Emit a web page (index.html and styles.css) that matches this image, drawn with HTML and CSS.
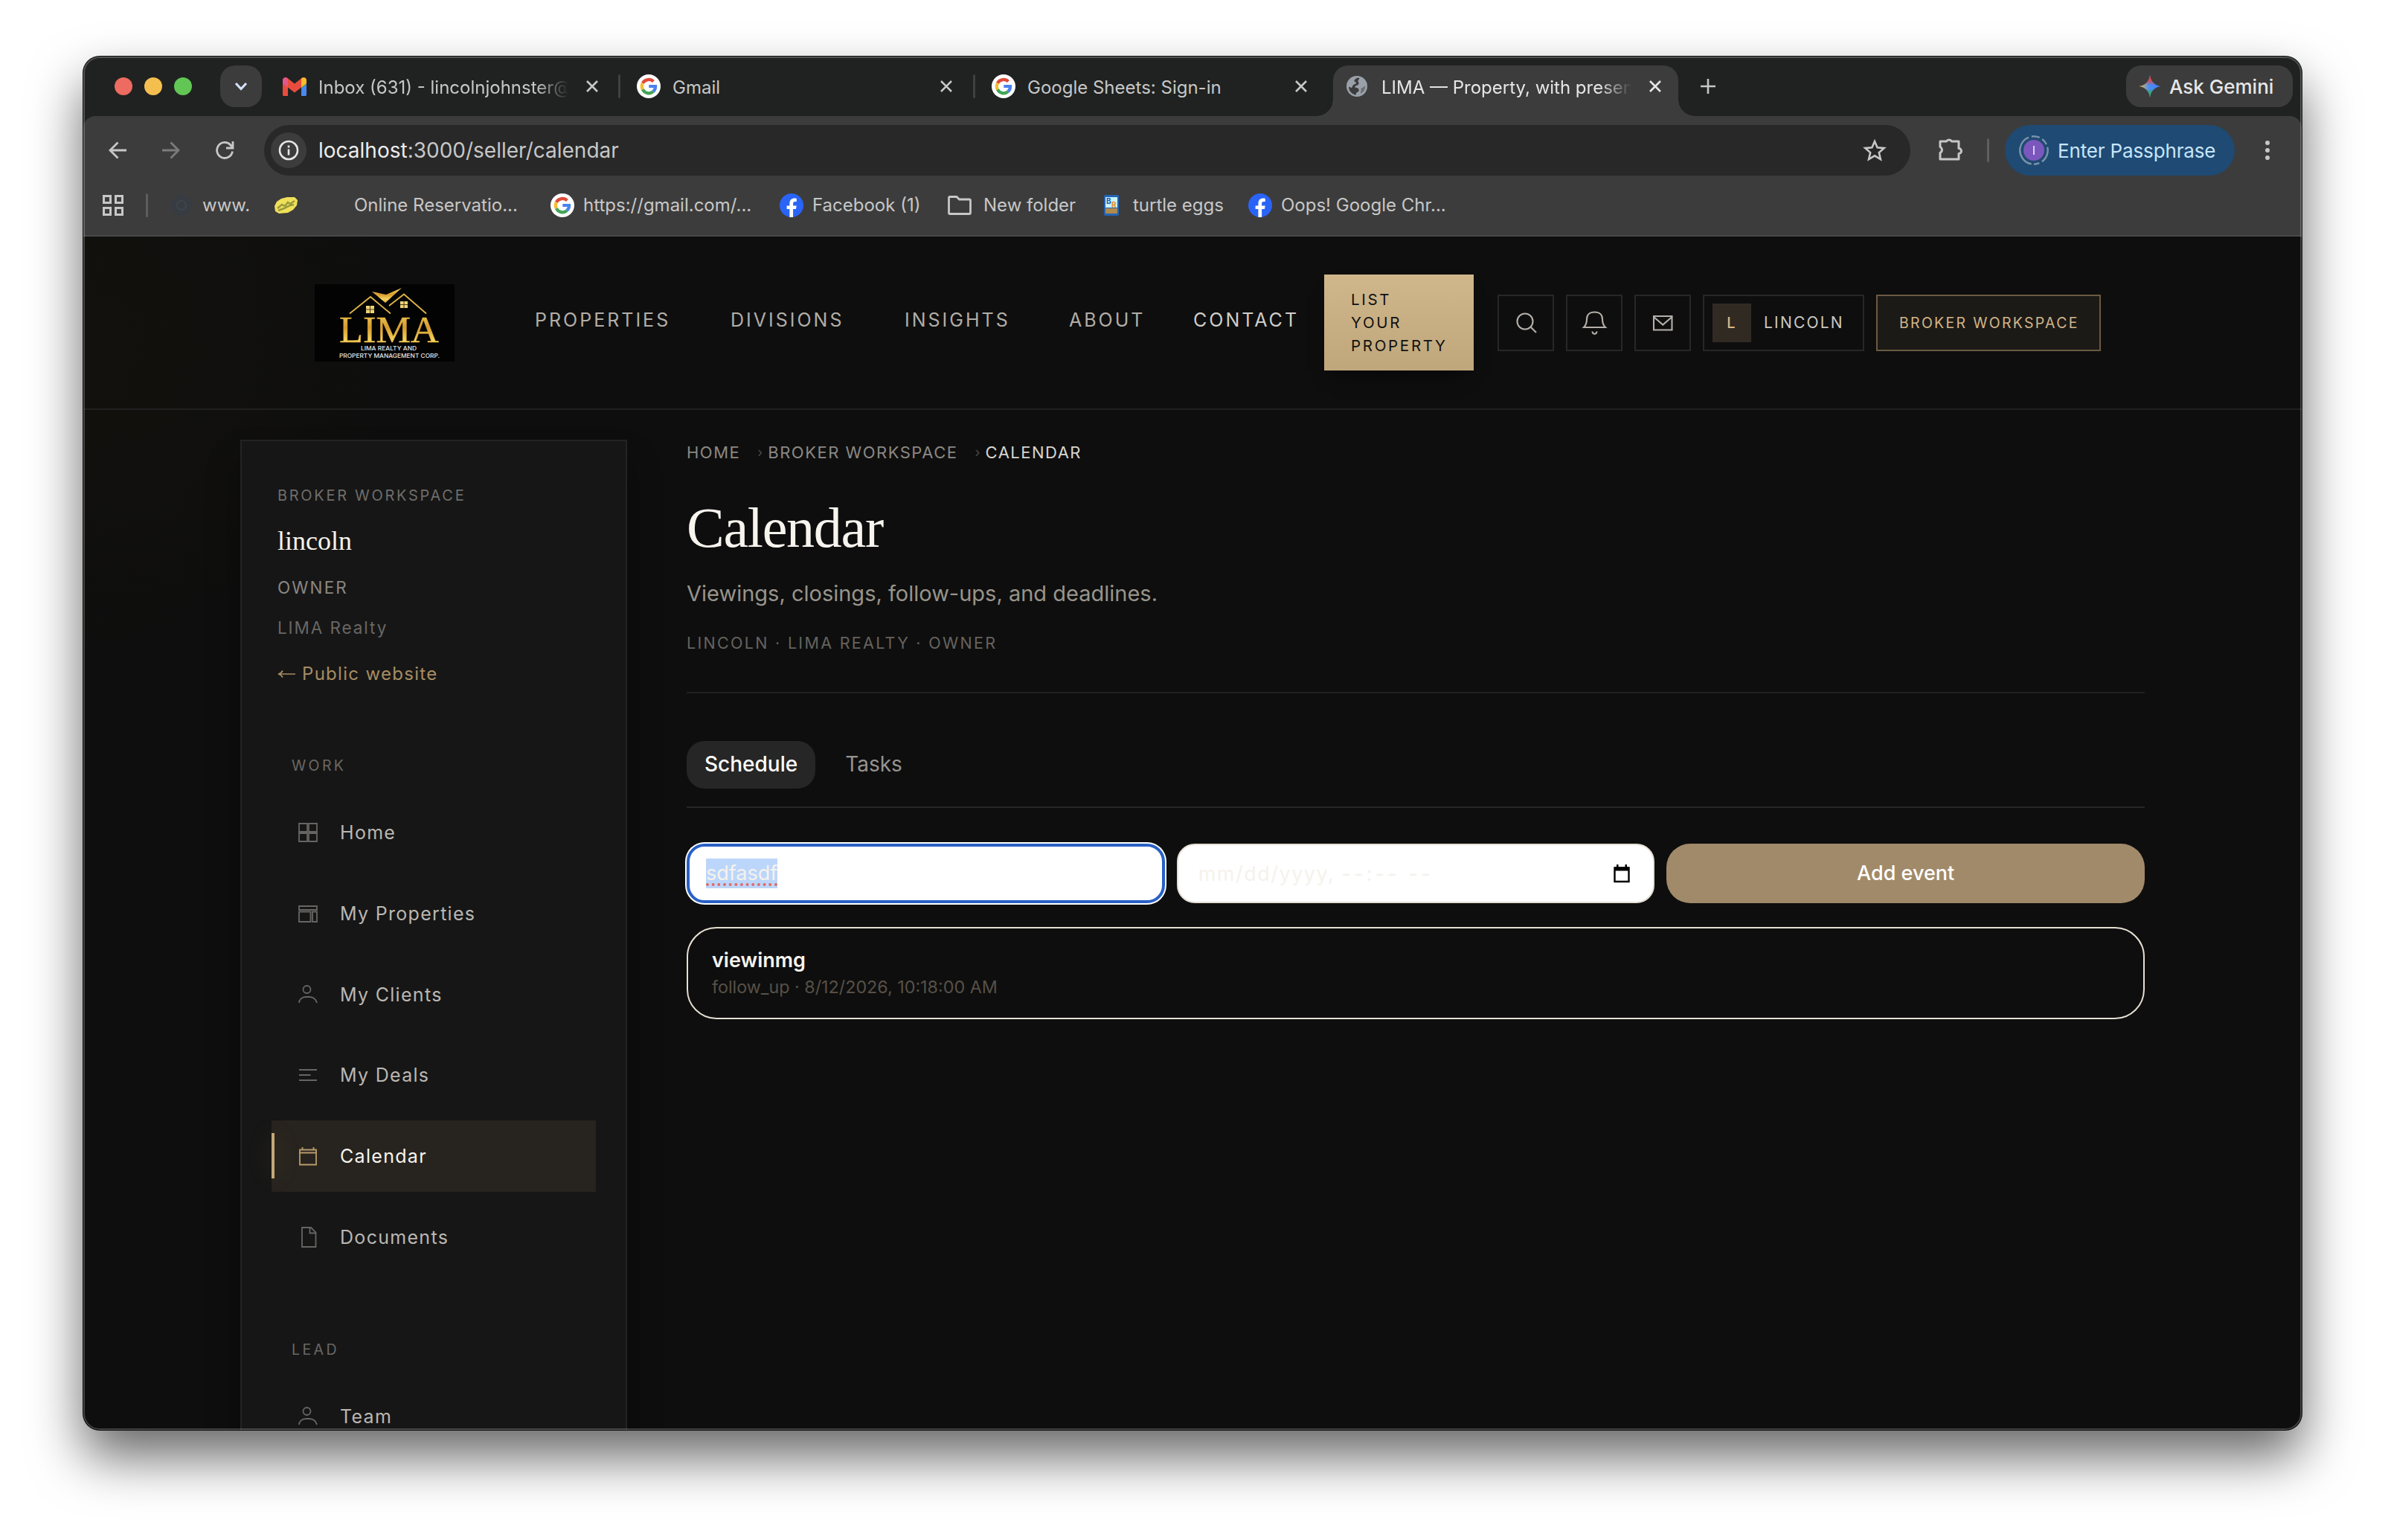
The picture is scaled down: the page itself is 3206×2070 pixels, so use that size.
FILE: index.html
```html
<!DOCTYPE html>
<html lang="en">
<head>
    <meta charset="UTF-8">
    <meta name="viewport" content="width=device-width, initial-scale=1.0">
    <title>LIMA — Property, with presence</title>
    <link rel="stylesheet" href="styles.css">
</head>

<body>

    <!-- shared icons -->
    <svg class="defs" width="0" height="0">
        <defs>
            <linearGradient id="gold" x1="0" y1="0" x2="0" y2="1">
                <stop offset="0" stop-color="#f6dc6c"/>
                <stop offset="0.45" stop-color="#d79a2c"/>
                <stop offset="0.75" stop-color="#f3d45e"/>
                <stop offset="1" stop-color="#e0a93a"/>
            </linearGradient>
            <linearGradient id="gemH" x1="0" y1="0" x2="1" y2="0">
                <stop offset="0" stop-color="#f6c02c"/>
                <stop offset="0.45" stop-color="#4d8df6"/>
                <stop offset="1" stop-color="#3f7cf0"/>
            </linearGradient>
            <linearGradient id="gemV" x1="0" y1="0" x2="0" y2="1">
                <stop offset="0" stop-color="#ea4335"/>
                <stop offset="0.2" stop-color="#ea4335"/>
                <stop offset="0.45" stop-color="#ea4335" stop-opacity="0"/>
                <stop offset="0.6" stop-color="#34a853" stop-opacity="0"/>
                <stop offset="0.85" stop-color="#34a853"/>
            </linearGradient>
            <symbol id="google" viewBox="0 0 32 32">
                <circle cx="16" cy="16" r="16" fill="#fff"/>
                <path d="M22.4 9.6 A9.2 9.2 0 0 0 7.9 11.7" fill="none" stroke="#e04a3a" stroke-width="4.2"/>
                <path d="M7.9 11.7 A9.2 9.2 0 0 0 7.9 20.3" fill="none" stroke="#f6bd2d" stroke-width="4.2"/>
                <path d="M7.9 20.3 A9.2 9.2 0 0 0 22 23.1" fill="none" stroke="#43a457" stroke-width="4.2"/>
                <path d="M22 23.1 A9.2 9.2 0 0 0 25.1 16 H16.3" fill="none" stroke="#4a82ee" stroke-width="4.2"/>
            </symbol>
            <symbol id="facebook" viewBox="0 0 32 32">
                <circle cx="16" cy="16" r="16" fill="#2a64f6"/>
                <path d="M13.4 32V21H9.6v-4.6h3.8v-2.6c0-5 2.6-7.2 6.6-7.2 1.2 0 2.2.1 2.8.3v4.2h-2c-2 0-2.7.9-2.7 2.7v2.6h4.6l-.8 4.6h-3.8v11z" fill="#fff"/>
            </symbol>
            <symbol id="cross" viewBox="0 0 16 16">
                <path d="M1 1L15 15M15 1L1 15" fill="none" stroke="currentColor" stroke-width="2.6"/>
            </symbol>
            <symbol id="person" viewBox="0 0 26 26">
                <circle cx="11.5" cy="6" r="5"/>
                <path d="M1 24c0-4.500 4-8 9-8h5c5 0 9 3.500 10 8"/>
            </symbol>
        </defs>
    </svg>

    <div class="window">

        <div class="tabstrip">
            <div class="lights">
                <span class="light red"></span>
                <span class="light yellow"></span>
                <span class="light green"></span>
            </div>
            <div class="tab-search">
                <svg width="20" height="14" viewBox="0 0 20 14"><path d="M3 3l7 7.500 7-7.500" fill="none" stroke="#d3e0fb" stroke-width="3.200"/></svg>
            </div>

            <div class="tab tab-first">
                <svg class="gmail" width="32" height="25" viewBox="0 0 32 25">
                    <path d="M0 4v19.500c0 .8.700 1.500 1.500 1.500H7V9z" fill="#e94c3d"/>
                    <path d="M25 9v16h5.500c.8 0 1.500-.7 1.500-1.500V4z" fill="#4a88f0"/>
                    <path d="M25 9v6l7-6V4z" fill="#43a457"/>
                    <path d="M0 4v4l16 12.500L32 8V4c0-3.500-3.800-5.200-6.500-3L16 8.500 6.500 1C3.800-1.200 0 .5 0 4z" fill="#e94c3d"/>
                    <path d="M25 1.500v12L32 8V4c0-3.500-4-5.200-7-2.500z" fill="#f6bd2d"/>
                    <path d="M7 1.500v12L0 8V4C0 .5 4-1.200 7 1.500z" fill="#e2578a"/>
                </svg>
                <span class="tab-title faded">Inbox (631) - lincolnjohnster@</span>
                <svg class="close"><use href="#cross"/></svg>
            </div>
            <div class="tab-divider"></div>
            <div class="tab tab-second">
                <svg class="favicon"><use href="#google"/></svg>
                <span class="tab-title">Gmail</span>
                <svg class="close"><use href="#cross"/></svg>
            </div>
            <div class="tab-divider"></div>
            <div class="tab">
                <svg class="favicon"><use href="#google"/></svg>
                <span class="tab-title">Google Sheets: Sign-in</span>
                <svg class="close"><use href="#cross"/></svg>
            </div>
            <div class="tab tab-active">
                <svg class="globe" width="28" height="28" viewBox="0 0 28 28">
                    <circle cx="14" cy="14" r="14" fill="#9aa0a9"/>
                    <path d="M15 2.500c-2 1-4.500 2-4.500 4.500 0 1.500 2.500 1 2.500 2.500s-3 1.500-4.500 3.500c-1 1.500-.5 2.500-2 3L3 14.500C3 21 8 25 13 25.500c-.5-2 .5-3.500 2.500-4 2-1 1.500-4-.5-5-1.500-.8-3-.5-4-1.500 1-2 3.500-2 5-3.500 1-1 .5-3-.5-4C15 6 17 5 17.500 3z" fill="#3c3c3c"/>
                    <path d="M17 9c0 3 1.500 4.500 4 5 1.500.4 2 2 4.500 1.500C26 9 22.500 4.500 19 3.500 19.500 6 17.500 7 17 9z" fill="#9aa0a9"/>
                    <path d="M25.500 13.500c-.5 5-3 8.500-6.500 10.500 0-3 1-4 .5-7 1.500-.5 3-2 6-3.500z" fill="#3c3c3c" opacity="0.500"/>
                </svg>
                <span class="tab-title faded">LIMA — Property, with presen</span>
                <svg class="close"><use href="#cross"/></svg>
            </div>
            <svg class="new-tab" width="22" height="22" viewBox="0 0 22 22"><path d="M11 1v20M1 11h20" stroke="#c7c7c7" stroke-width="2.600"/></svg>
            <div class="gemini">
                <svg width="30" height="30" viewBox="0 0 30 30">
                    <path d="M15 0c1 8.500 6.500 14 15 15-8.500 1-14 6.500-15 15-1-8.500-6.500-14-15-15C8.500 14 14 8.500 15 0z" fill="url(#gemH)"/>
                    <path d="M15 0c1 8.500 6.500 14 15 15-8.500 1-14 6.500-15 15-1-8.500-6.500-14-15-15C8.500 14 14 8.500 15 0z" fill="url(#gemV)"/>
                </svg>
                <span>Ask Gemini</span>
            </div>
        </div>

        <div class="toolbar">
            <div class="nav-icons">
                <svg width="26" height="26" viewBox="0 0 26 26"><path d="M25 13H3M13.500 2.500L3 13l10.500 10.500" fill="none" stroke="#c7c7c7" stroke-width="2.800"/></svg>
                <svg width="26" height="26" viewBox="0 0 26 26"><path d="M1 13h22M12.500 2.500L23 13 12.500 23.500" fill="none" stroke="#7b7b7b" stroke-width="2.800"/></svg>
                <svg width="26" height="26" viewBox="0 0 26 26"><path d="M23.500 14.500A10.500 10.500 0 1 1 21 6l2.500 3M24 1v9h-9" fill="none" stroke="#c7c7c7" stroke-width="2.800"/></svg>
            </div>
            <div class="omnibox">
                <div class="site-info">
                    <svg width="28" height="28" viewBox="0 0 28 28"><circle cx="14" cy="14" r="12" fill="none" stroke="#e6e6e6" stroke-width="2.600"/><path d="M14 12.500v8M14 7.500v3" stroke="#e6e6e6" stroke-width="2.600"/></svg>
                </div>
                <div class="url"><b>localhost</b>:3000/seller/calendar</div>
                <svg width="32" height="30" viewBox="0 0 32 30"><path d="M16 3l3.600 8.300 9.100.8-6.900 6 2.100 8.900L16 22.300 8.100 27l2.100-8.900-6.900-6 9.100-.8z" fill="none" stroke="#c7c7c7" stroke-width="2.600"/></svg>
            </div>
            <svg class="puzzle" width="34" height="34" viewBox="0 0 34 34"><path d="M3 7h8.500a4 4 0 0 1 7 0H28v9.500a3.500 3.500 0 0 1 0 7V31H3v-8.500a4.500 4.500 0 0 0 0-8z" fill="none" stroke="#c7c7c7" stroke-width="3" stroke-linejoin="round"/></svg>
            <div class="bar-divider"></div>
            <div class="profile-chip">
                <svg width="40" height="40" viewBox="0 0 40 40">
                    <circle cx="20" cy="20" r="18.700" fill="none" stroke="#7b93ab" stroke-width="2.400" stroke-dasharray="48 4 11 4 9 4 22 4 7.500 4" transform="rotate(100 20 20)"/>
                    <circle cx="20" cy="20" r="14" fill="#7b57bd"/>
                    <path d="M20 14v12" stroke="#e4daf6" stroke-width="1.800"/>
                </svg>
                <span>Enter Passphrase</span>
            </div>
            <div class="dots"><i></i><i></i><i></i></div>
        </div>

        <div class="bookmarks">
            <svg class="apps" width="28" height="28" viewBox="0 0 28 28"><path d="M1.500 1.500h9v9h-9zM17.500 1.500h9v9h-9zM1.500 17.500h9v9h-9zM17.500 17.500h9v9h-9z" fill="none" stroke="#c7c7c7" stroke-width="3"/></svg>
            <div class="bar-divider"></div>
            <div class="bookmark bm-www">
                <svg width="28" height="28" viewBox="0 0 28 28"><circle cx="14" cy="14" r="13.500" fill="#363c42"/><circle cx="14" cy="14" r="6" fill="none" stroke="#3e4449" stroke-width="2"/></svg>
                <span>www.</span>
            </div>
            <div class="bookmark bm-online">
                <svg width="32" height="22" viewBox="0 0 32 22"><path d="M1 12l3-6 6-4 8-2h10l4 4-1 7-5 6-7 4-12 1-5-3z" fill="#efe05a"/><path d="M5 15l6-5 4 2 4-5 3 2 6-4M6 18l8-3 8-4 5-1" fill="none" stroke="#9a9a3c" stroke-width="2.500"/></svg>
                <span>Online Reservatio...</span>
            </div>
            <div class="bookmark bm-gmail">
                <svg class="favicon"><use href="#google"/></svg>
                <span>https://gmail.com/...</span>
            </div>
            <div class="bookmark bm-fb">
                <svg class="favicon"><use href="#facebook"/></svg>
                <span>Facebook (1)</span>
            </div>
            <div class="bookmark bm-folder">
                <svg width="32" height="26" viewBox="0 0 32 26"><path d="M3 1.500h9l3.500 3.500H29c1 0 1.500.5 1.500 1.500V23c0 1-.5 1.500-1.500 1.500H3c-1 0-1.500-.5-1.500-1.500V3c0-1 .5-1.500 1.500-1.500z" fill="none" stroke="#c7c7c7" stroke-width="2.800"/></svg>
                <span>New folder</span>
            </div>
            <div class="bookmark bm-turtle">
                <svg width="20" height="28" viewBox="0 0 20 28">
                    <rect width="20" height="28" rx="2" fill="#2364b4"/>
                    <rect x="2" y="3" width="16" height="14" fill="#c9f3f8"/>
                    <rect x="2" y="18" width="16" height="7" fill="#b08a4e"/>
                    <text x="3" y="12" font-size="10" font-weight="700" fill="#2257b5">B</text>
                    <text x="10" y="17" font-size="10" font-weight="700" fill="#e58b2b">R</text>
                </svg>
                <span>turtle eggs</span>
            </div>
            <div class="bookmark bm-oops">
                <svg class="favicon"><use href="#facebook"/></svg>
                <span>Oops! Google Chr...</span>
            </div>
        </div>

        <div class="page">

            <header class="site-header">
                <svg class="logo" width="188" height="104" viewBox="0 0 188 104">
                    <rect width="188" height="104" fill="#030303"/>
                    <path d="M47 39.500L75 17l27 22.500M100 29l20-15.500 30 26" fill="none" stroke="#dcb548" stroke-width="1.800"/>
                    <path d="M77 10l19 4 21-9-22 20z" fill="url(#gold)"/>
                    <path d="M69 29h11v10H69zM115 23h10v9h-10z" fill="#ecd476"/>
                    <path d="M74.500 29v10M69 34h11M120 23v9M115 27.500h10" stroke="#4a3a10" stroke-width="1"/>
                    <text class="logo-name" x="33" y="78" textLength="134" lengthAdjust="spacingAndGlyphs" fill="url(#gold)">LIMA</text>
                    <text class="logo-sub" x="62" y="89" textLength="75" lengthAdjust="spacingAndGlyphs">LIMA REALTY AND</text>
                    <text class="logo-sub" x="33" y="98.500" textLength="135" lengthAdjust="spacingAndGlyphs">PROPERTY MANAGEMENT CORP.</text>
                </svg>
                <nav class="site-nav">
                    <a>PROPERTIES</a>
                    <a>DIVISIONS</a>
                    <a>INSIGHTS</a>
                    <a>ABOUT</a>
                    <a class="bright">CONTACT</a>
                </nav>
                <a class="cta">LIST YOUR PROPERTY</a>
                <div class="header-tools">
                    <a class="tool"><svg width="72" height="72" viewBox="2 2 72 72"><circle cx="37" cy="36" r="10.500"/><path d="M44.500 43.500l7.500 7.500"/></svg></a>
                    <a class="tool"><svg width="72" height="72" viewBox="2 2 72 72"><path d="M24 44h29c-3-3-4-6-4-11 0-6-4-9.500-10.500-9.500S28 27 28 33c0 5-1 8-4 11zM35.500 49.500c.5 4.500 5.500 4.500 6 0"/></svg></a>
                    <a class="tool"><svg width="72" height="72" viewBox="2 2 72 72"><path d="M26 29h24.500v18.500H26zM26 30l12.300 10.500L50.500 30"/></svg></a>
                    <a class="user"><span class="initial">L</span>LINCOLN</a>
                    <a class="broker">BROKER WORKSPACE</a>
                </div>
            </header>

            <div class="layout">
                <aside class="sidebar">
                    <div class="account">
                        <div class="eyebrow">BROKER WORKSPACE</div>
                        <div class="account-name">lincoln</div>
                        <div class="account-role">OWNER</div>
                        <div class="account-firm">LIMA Realty</div>
                        <a class="public-link"><svg width="24" height="12" viewBox="0 0 24 12"><path d="M24 6H1.500M7 1.500C5.500 4 4 5.500 1 6c3 .5 4.500 2 6 4.500" fill="none" stroke="#a78c62" stroke-width="1.700"/></svg>Public website</a>
                    </div>
                    <div class="group-title">WORK</div>
                    <ul class="menu">
                        <li><svg class="menu-icon" viewBox="0 0 26 26"><path d="M1 1h11v11H1zM14 1h11v11H14zM1 14h11v11H1zM14 14h11v11H14z"/></svg>Home</li>
                        <li><svg class="menu-icon" viewBox="0 0 26 26"><path d="M1 3h24v5H1zM1 10.500h15.500V24H1zM19 10.500h6V24h-6z"/></svg>My Properties</li>
                        <li><svg class="menu-icon"><use href="#person"/></svg>My Clients</li>
                        <li><svg class="menu-icon" viewBox="0 0 26 26"><path d="M1 6h24M1 13h15.500M1 20h24"/></svg>My Deals</li>
                        <li class="active"><svg class="menu-icon" viewBox="0 0 26 26"><path d="M2 4.500h22v20H2zM1 8.500h24M5.500 1v3.500M20.500 1v3.500"/></svg>Calendar</li>
                        <li><svg class="menu-icon" viewBox="0 0 26 26"><path d="M5 0h12l6.500 6.500V26H5zM15.500 0v7.500h8"/></svg>Documents</li>
                    </ul>
                    <div class="group-title">LEAD</div>
                    <ul class="menu">
                        <li><svg class="menu-icon"><use href="#person"/></svg>Team</li>
                    </ul>
                </aside>

                <main class="content">
                    <div class="crumbs">
                        <span>HOME</span><i>›</i>
                        <span>BROKER WORKSPACE</span><i>›</i>
                        <span class="current">CALENDAR</span>
                    </div>
                    <h1>Calendar</h1>
                    <p class="lead">Viewings, closings, follow-ups, and deadlines.</p>
                    <p class="meta">LINCOLN · LIMA REALTY · OWNER</p>

                    <div class="tabs">
                        <a class="pill selected">Schedule</a>
                        <a class="pill">Tasks</a>
                    </div>

                    <div class="event-form">
                        <div class="field focused"><span class="selection">sdfasdf</span></div>
                        <div class="field">
                            <span class="placeholder">mm/dd/yyyy, <span class="time">--:-- --</span></span>
                            <svg width="22" height="25" viewBox="0 0 22 25"><path d="M1.500 4.500h19v18.500h-19z" fill="none" stroke="#000" stroke-width="2.400"/><path d="M1 3.500h20v5H1zM4 0h2.500v4H4zM15.500 0H18v4h-2.500z"/></svg>
                        </div>
                        <div class="add-btn">Add event</div>
                    </div>

                    <div class="event">
                        <div class="event-title">viewinmg</div>
                        <div class="event-info">follow_up · 8/12/2026, 10:18:00 AM</div>
                    </div>
                </main>
            </div>
        </div>
    </div>

</body>
</html>
```
FILE: styles.css
```css
* {
    box-sizing: border-box;
}
body {
    margin: 0;
    padding: 76px 112px 0;
    width: 3206px;
    height: 2070px;
    overflow: hidden;
    background: #fff;
    font-family: Inter, "Liberation Sans", sans-serif;
}
svg {
    flex: none;
    display: block;
}
.defs {
    position: absolute;
}
.window {
    position: relative;
    width: 2982px;
    height: 1846px;
    border-radius: 22px;
    overflow: hidden;
    background: #0e0e0e;
    box-shadow: 0 0 0 1px #111, 0 36px 70px rgba(0, 0, 0, 0.6);
}
/* thin light rim over the window edge */
.window::after {
    content: "";
    position: absolute;
    inset: 0;
    border: 2px solid rgba(255, 255, 255, 0.22);
    border-radius: 22px;
    pointer-events: none;
}

/* tab strip */
.tabstrip {
    display: flex;
    height: 80px;
    padding-left: 42px;
    background: #202221;
    align-items: center;
    font-size: 24px;
    color: #c7c7c7;
}
.lights {
    display: flex;
    gap: 16px;
    margin-right: 38px;
}
.light {
    width: 24px;
    height: 24px;
    border-radius: 50%;
}
.red { background: #ed6b60; }
.yellow { background: #f5bf4f; }
.green { background: #62c655; }
.tab-search {
    width: 56px;
    height: 56px;
    border-radius: 20px;
    background: #3c3c3c;
    display: flex;
    align-items: center;
    justify-content: center;
}
.tab {
    display: flex;
    align-items: center;
    width: 474px;
    height: 56px;
    padding-left: 21px;
}
.tab-first {
    width: 479px;
    padding-left: 28px;
}
.tab-second {
    width: 473px;
}
.favicon {
    width: 32px;
    height: 32px;
}
.tab-title {
    width: 340px;
    margin: 3px 0 0 16px;
    overflow: hidden;
    white-space: nowrap;
    line-height: 34px;
}
.faded {
    -webkit-mask-image: linear-gradient(to right, #000 86%, transparent 99%);
    mask-image: linear-gradient(to right, #000 86%, transparent 99%);
}
.close {
    width: 16px;
    height: 16px;
    margin-left: 20px;
}
.tab-divider {
    width: 3px;
    height: 32px;
    margin-right: 1px;
    border-radius: 2px;
    background: #3f4140;
}
.tab-active {
    position: relative;
    width: 464px;
    height: 68px;
    padding: 0 0 12px 18px;
    margin: 12px 0 0 6px;
    border-radius: 20px 20px 0 0;
    background: #3c3c3c;
    color: #e6e6e6;
}
.tab-active::before,
.tab-active::after {
    content: "";
    position: absolute;
    bottom: 0;
    width: 22px;
    height: 22px;
}
.tab-active::before {
    left: -22px;
    background: radial-gradient(circle at 0 0, transparent 21.5px, #3c3c3c 22px);
}
.tab-active::after {
    right: -22px;
    background: radial-gradient(circle at 100% 0, transparent 21.5px, #3c3c3c 22px);
}
.tab-active .tab-title {
    margin-left: 19px;
    width: 340px;
}
.new-tab {
    margin-left: 29px;
}
.gemini {
    display: flex;
    align-items: center;
    width: 224px;
    height: 56px;
    margin-left: auto;
    margin-right: 12px;
    padding-left: 17px;
    gap: 11px;
    border-radius: 20px;
    background: #3c3c3c;
    color: #e6e6e6;
    font-size: 26px;
    font-weight: 500;
    white-space: nowrap;
}

/* toolbar */
.toolbar {
    display: flex;
    align-items: center;
    height: 92px;
    padding-left: 33px;
    background: #3c3c3c;
    border-radius: 16px 16px 0 0;
    box-shadow: 0 -16px 0 0 #202221;
}
.tab-active {
    z-index: 1;
}
.nav-icons {
    display: flex;
    gap: 46px;
    width: 210px;
}
.omnibox {
    display: flex;
    align-items: center;
    width: 2213px;
    height: 68px;
    padding: 0 32px 0 9px;
    border-radius: 34px;
    background: #282828;
}
.site-info {
    width: 48px;
    height: 48px;
    border-radius: 50%;
    background: #3c3c3c;
    display: flex;
    align-items: center;
    justify-content: center;
}
.url {
    flex: 1;
    margin-left: 16px;
    font-size: 28px;
    color: #c7c7c7;
}
.url b {
    font-weight: 400;
    color: #ececec;
}
.puzzle {
    margin: 0 32px 4px 37px;
}
.bar-divider {
    width: 3px;
    height: 32px;
    border-radius: 2px;
    background: #5e5e5e;
}
.profile-chip {
    display: flex;
    align-items: center;
    width: 309px;
    height: 68px;
    margin-left: 21px;
    padding-left: 19px;
    gap: 12px;
    border-radius: 34px;
    background: #1f4a73;
    color: #c6e5fc;
    font-size: 26px;
    letter-spacing: -0.15px;
    white-space: nowrap;
}
.dots {
    display: flex;
    flex-direction: column;
    gap: 4px;
    margin-left: 41px;
}
.dots i {
    width: 6px;
    height: 6px;
    border-radius: 50%;
    background: #c7c7c7;
}

/* bookmarks */
.bookmarks {
    display: flex;
    align-items: center;
    height: 70px;
    padding: 0 0 13px 26px;
    background: #3c3c3c;
    color: #c7c7c7;
    font-size: 24px;
    border-bottom: 2px solid #484848;
}
.bookmarks .bar-divider {
    margin: 0 31px 0 30px;
}
.bookmark {
    display: flex;
    align-items: center;
    gap: 12px;
    white-space: nowrap;
}
.bm-www { width: 138px; gap: 14px; }
.bm-online { width: 372px; gap: 76px; }
.bm-gmail { width: 308px; }
.bm-fb { width: 226px; }
.bm-folder { width: 210px; gap: 16px; }
.bm-turtle { width: 194px; gap: 19px; }

/* site */
.page {
    height: 1604px;
    background: radial-gradient(ellipse 420px 420px at 0 140px, #12110d, rgba(14, 14, 14, 0));
}
.site-header {
    display: flex;
    align-items: center;
    height: 233px;
    padding: 0 0 0 311px;
    border-bottom: 2px solid #202020;
}
.logo-name {
    font-family: "Liberation Serif", serif;
    font-weight: 400;
    font-size: 50px;
    stroke: #dba83a;
    stroke-width: 0.6;
}
.logo-sub {
    font-size: 7.5px;
    font-weight: 500;
    fill: #e8e8e8;
}
.site-nav {
    display: grid;
    grid-template-columns: 263px 234px 221px 167px 176px;
    margin: -8px 0 0 108px;
    font-size: 25px;
    line-height: 40px;
    letter-spacing: 3px;
    color: #b1ada8;
}
.bright {
    color: #d0cdc8;
}
.cta {
    width: 201px;
    height: 129px;
    padding: 18px 36px;
    background: linear-gradient(#cfb78b, #bfa77b);
    box-shadow: 0 16px 24px -12px rgba(0, 0, 0, 0.6);
    color: #111;
    font-size: 20.5px;
    line-height: 31px;
    letter-spacing: 2.7px;
}
.header-tools {
    display: flex;
    gap: 16px;
    margin-left: 32px;
}
.tool,
.user,
.broker {
    display: flex;
    align-items: center;
    height: 76px;
    border: 2px solid #272727;
}
.tool {
    width: 76px;
}
.tool svg {
    fill: none;
    stroke: #b5afaa;
    stroke-width: 2.1;
}
.user {
    width: 217px;
    padding-left: 11px;
    color: #cbc8c3;
    font-size: 21px;
    letter-spacing: 2.2px;
}
.initial {
    width: 52px;
    height: 52px;
    margin-right: 17px;
    background: #302a23;
    color: #d9b88a;
    line-height: 52px;
    text-align: center;
    font-weight: 500;
    font-size: 20px;
}
.broker {
    width: 302px;
    padding-left: 29px;
    background: #1c1a16;
    border-color: #6a5a41;
    color: #d2b58a;
    font-size: 19.5px;
    letter-spacing: 2.3px;
    white-space: nowrap;
}

.layout {
    display: flex;
    padding: 40px 0 0 211px;
}

/* sidebar */
.sidebar {
    width: 520px;
    height: 1500px;
    padding: 57px 40px 0;
    background: #161616;
    border: 2px solid #232323;
    box-shadow: 0 30px 40px rgba(0, 0, 0, 0.35);
}
.account {
    padding-left: 8px;
    height: 336px;
    margin-bottom: 27px;
}
.eyebrow {
    font-size: 20px;
    line-height: 32px;
    letter-spacing: 2.7px;
    color: #6f6d6b;
}
.account-name {
    margin-top: 23px;
    font-family: "Liberation Serif", serif;
    font-size: 36px;
    line-height: 44px;
    color: #f5f2ec;
}
.account-role {
    margin-top: 25px;
    font-size: 22.5px;
    line-height: 32px;
    letter-spacing: 2.1px;
    color: #8a8783;
}
.account-firm {
    margin-top: 22px;
    font-size: 22.5px;
    line-height: 32px;
    letter-spacing: 1.9px;
    color: #696764;
}
.public-link {
    display: flex;
    align-items: center;
    gap: 9px;
    margin-top: 30px;
    font-size: 24px;
    line-height: 32px;
    letter-spacing: 1.3px;
    color: #a78c62;
}
.group-title {
    padding-left: 27px;
    font-size: 19.5px;
    line-height: 32px;
    letter-spacing: 3.4px;
    color: #6a6865;
}
.menu {
    list-style: none;
    margin: 0;
    padding: 26px 0 74px;
}
.menu li {
    position: relative;
    display: flex;
    align-items: center;
    height: 96px;
    margin-bottom: 12.75px;
    padding-left: 36px;
    font-size: 25px;
    letter-spacing: 1.3px;
    color: #bab7b2;
}
.menu-icon {
    width: 26px;
    height: 26px;
    margin-right: 30px;
    fill: none;
    stroke: #676563;
    stroke-width: 1.8;
    overflow: visible;
}
.menu .active {
    background: #27231e;
    color: #f7f4ee;
}
.active .menu-icon {
    stroke: #b89c6b;
}
.active::before {
    content: "";
    position: absolute;
    left: 0;
    top: 17px;
    width: 4px;
    height: 61px;
    background: #c4a878;
    box-shadow: 0 0 32px rgba(196, 168, 120, 0.3);
}

/* content */
.content {
    width: 1960px;
    margin-left: 80px;
}
.crumbs {
    display: flex;
    line-height: 34px;
    font-size: 22px;
    letter-spacing: 1.5px;
    color: #8b8884;
}
.crumbs i {
    width: 37px;
    padding-left: 23px;
    font-style: normal;
    font-size: 18px;
    color: #4a4846;
}
.current {
    color: #d8d5d0;
}
h1 {
    margin: 36px 0 0;
    font-family: "Liberation Serif", serif;
    font-weight: 400;
    font-size: 76px;
    line-height: 96px;
    letter-spacing: -1.3px;
    color: #f7f4ee;
}
.lead {
    margin: 19px 0 0;
    font-size: 29px;
    line-height: 44px;
    color: #98948b;
}
.meta {
    margin: 24px 0 0;
    padding-bottom: 46px;
    font-size: 21.5px;
    line-height: 40px;
    letter-spacing: 2.3px;
    color: #66635f;
    border-bottom: 2px solid #202020;
}
.tabs {
    display: flex;
    gap: 16px;
    height: 154px;
    padding-top: 64px;
    border-bottom: 2px solid #262626;
}
.pill {
    height: 64px;
    padding: 0 24px;
    border-radius: 24px;
    font-size: 28px;
    line-height: 63px;
    color: #969390;
}
.selected {
    background: #262626;
    color: #fff;
    font-weight: 500;
}
.event-form {
    display: grid;
    grid-template-columns: repeat(3, 1fr);
    gap: 16px;
    margin-top: 48px;
    font-size: 27px;
}
.field {
    display: flex;
    align-items: center;
    justify-content: space-between;
    height: 80px;
    padding: 0 31px 0 27px;
    border: 2px solid #e5dfd3;
    border-radius: 24px;
    background: #fff;
    color: #f5f2ec;
}
.focused {
    padding: 0 22px;
    border: 4px solid #2860c5;
    box-shadow: 0 0 0 2px #fff;
}
.selection {
    height: 40px;
    line-height: 40px;
    background: #bcd6fb;
    text-decoration: underline dotted #e06c66 4px;
    text-underline-offset: 4px;
}
.placeholder {
    letter-spacing: 1.5px;
}
.time {
    letter-spacing: 4.2px;
}
.add-btn {
    border-radius: 32px;
    background: #a18a69;
    color: #fff;
    font-weight: 500;
    line-height: 79px;
    text-align: center;
}
.event {
    height: 124px;
    margin-top: 32px;
    padding: 24px 32px;
    border: 2px solid #e5dfd3;
    border-radius: 40px;
}
.event-title {
    font-size: 27px;
    font-weight: 600;
    line-height: 38px;
    color: #f7f4ee;
}
.event-info {
    font-size: 23.3px;
    line-height: 34px;
    color: #575046;
}
```
